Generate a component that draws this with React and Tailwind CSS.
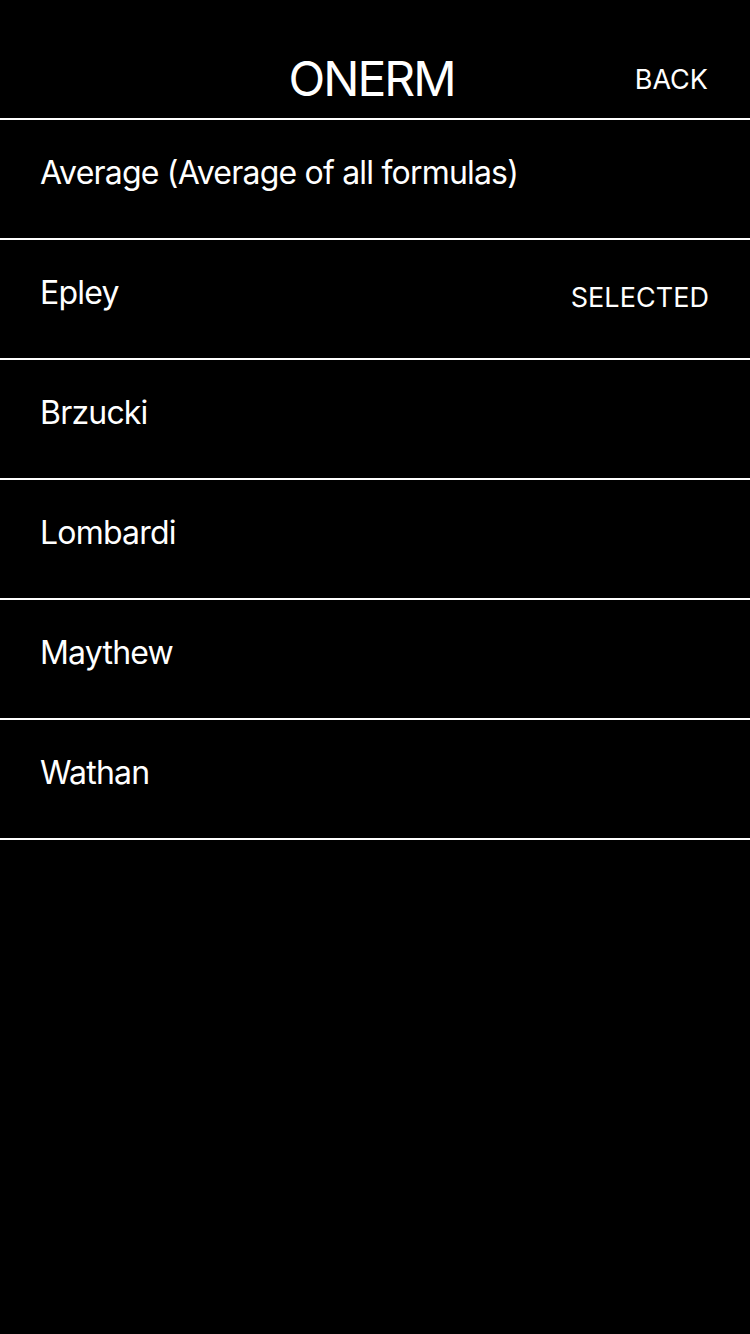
export default function App() {
  const rows = [
    { name: "Average (Average of all formulas)" },
    { name: "Epley", selected: true },
    { name: "Brzucki" },
    { name: "Lombardi" },
    { name: "Maythew" },
    { name: "Wathan" },
  ];
  return (
    <div
      className="min-h-[1334px] w-[750px] bg-black text-white"
      style={{ fontFamily: "Inter, 'Noto Sans', sans-serif" }}
    >
      <div className="h-[120px] border-b-2 border-white pt-[40px]">
        <div className="relative flex h-[78px] items-center justify-center">
          <span className="pr-[7px] text-[48px] leading-none tracking-[-2px]">ONERM</span>
          <span className="absolute right-[42px] top-1/2 -translate-y-1/2 text-[27px] leading-none">
            BACK
          </span>
        </div>
      </div>
      {rows.map((r) => (
        <div
          key={r.name}
          className="flex h-[120px] items-start justify-between border-b-2 border-white pl-[40px] pr-[41px] pt-[37px]"
        >
          <span className="text-[32px] leading-none tracking-[-0.8px]">{r.name}</span>
          {r.selected && (
            <span className="mt-[7px] text-[27px] leading-none tracking-[0.05px]">SELECTED</span>
          )}
        </div>
      ))}
    </div>
  );
}
